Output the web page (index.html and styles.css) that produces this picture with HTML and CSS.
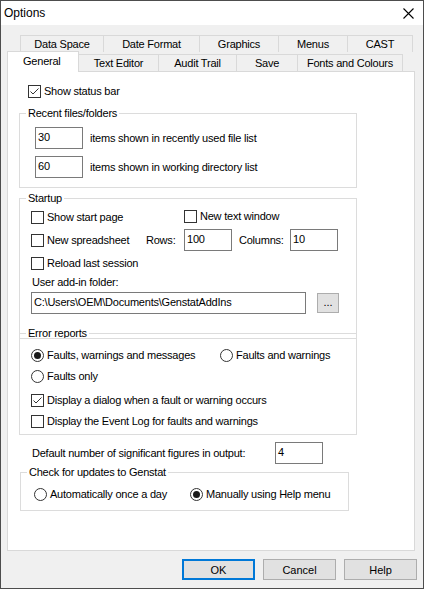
FILE: index.html
```html
<!DOCTYPE html>
<html>
<head>
<meta charset="utf-8">
<link rel="stylesheet" href="styles.css">
</head>
<body>
<div class="window">
  <div class="titlebar">
    <span class="title">Options</span>
    <svg class="close" width="11" height="11" viewBox="0 0 11 11"><path d="M0.5 0.5 L10.5 10.5 M10.5 0.5 L0.5 10.5" stroke="#000" stroke-width="1.1" fill="none"/></svg>
  </div>

  <div class="tabs">
    <div class="tabrow back">
      <div class="tab w-ds">Data Space</div>
      <div class="tab w-df">Date Format</div>
      <div class="tab w-gr">Graphics</div>
      <div class="tab w-me">Menus</div>
      <div class="tab w-ca last">CAST</div>
    </div>
    <div class="tabrow front">
      <div class="tab sel w-ge">General</div>
      <div class="tab w-te">Text Editor</div>
      <div class="tab w-at">Audit Trail</div>
      <div class="tab w-sa">Save</div>
      <div class="tab w-fc">Fonts and Colours</div>
    </div>
  </div>

  <div class="panel">
    <div class="check status"><span class="box checked"><svg width="11" height="11" viewBox="0 0 11 11"><path d="M1.5 5.5 L4 8 L9.5 2.5" stroke="#333" stroke-width="1" fill="none"/></svg></span><span>Show status bar</span></div>

    <div class="group recent">
      <span class="legend">Recent files/folders</span>
      <div class="field-row"><span class="input w48">30</span><span>items shown in recently used file list</span></div>
      <div class="field-row second"><span class="input w48">60</span><span>items shown in working directory list</span></div>
    </div>

    <div class="group startup">
      <span class="legend">Startup</span>
      <div class="row rowa">
        <div class="check c-start"><span class="box"></span><span>Show start page</span></div>
        <div class="check c-text"><span class="box"></span><span>New text window</span></div>
      </div>
      <div class="row rowb">
        <div class="check c-sheet"><span class="box"></span><span>New spreadsheet</span></div>
        <span class="lbl-rows">Rows:</span>
        <span class="input w48">100</span>
        <span class="lbl-cols">Columns:</span>
        <span class="input w48">10</span>
      </div>
      <div class="check rowc"><span class="box"></span><span>Reload last session</span></div>
      <div class="folder-label">User add-in folder:</div>
      <div class="row path-row">
        <span class="input path">C:\Users\OEM\Documents\GenstatAddIns</span>
        <span class="btn small">...</span>
      </div>
    </div>

    <div class="group errors">
      <span class="legend">Error reports</span>
      <div class="row">
        <div class="radio r-fwm"><svg width="13" height="13" viewBox="0 0 13 13"><circle cx="6.5" cy="6.5" r="6" fill="#fff" stroke="#333"/><circle cx="6.5" cy="6.5" r="3.5" fill="#1a1a1a"/></svg><span>Faults, warnings and messages</span></div>
        <div class="radio"><svg width="13" height="13" viewBox="0 0 13 13"><circle cx="6.5" cy="6.5" r="6" fill="#fff" stroke="#333"/></svg><span>Faults and warnings</span></div>
      </div>
      <div class="radio r-only"><svg width="13" height="13" viewBox="0 0 13 13"><circle cx="6.5" cy="6.5" r="6" fill="#fff" stroke="#333"/></svg><span>Faults only</span></div>
      <div class="check c-dialog"><span class="box checked"><svg width="11" height="11" viewBox="0 0 11 11"><path d="M1.5 5.5 L4 8 L9.5 2.5" stroke="#333" stroke-width="1" fill="none"/></svg></span><span>Display a dialog when a fault or warning occurs</span></div>
      <div class="check c-log"><span class="box"></span><span>Display the Event Log for faults and warnings</span></div>
    </div>

    <div class="sigfig">
      <span class="sig-label">Default number of significant figures in output:</span>
      <span class="input w48">4</span>
    </div>

    <div class="group updates">
      <span class="legend">Check for updates to Genstat</span>
      <div class="row">
        <div class="radio r-auto"><svg width="13" height="13" viewBox="0 0 13 13"><circle cx="6.5" cy="6.5" r="6" fill="#fff" stroke="#333"/></svg><span>Automatically once a day</span></div>
        <div class="radio"><svg width="13" height="13" viewBox="0 0 13 13"><circle cx="6.5" cy="6.5" r="6" fill="#fff" stroke="#333"/><circle cx="6.5" cy="6.5" r="3.5" fill="#1a1a1a"/></svg><span>Manually using Help menu</span></div>
      </div>
    </div>
  </div>

  <div class="footer">
    <span class="btn default">OK</span>
    <span class="btn">Cancel</span>
    <span class="btn">Help</span>
  </div>
</div>
</body>
</html>
```

FILE: styles.css
```css
* { box-sizing: border-box; }
html, body { margin: 0; padding: 0; }
body {
  font-family: "Liberation Sans", Arial, sans-serif;
  font-size: 11px;
  letter-spacing: -0.22px;
  color: #000;
  background: #f0f0f0;
}
.window {
  width: 424px;
  height: 589px;
  border: 1px solid #4d4d4d;
  background: #f0f0f0;
  display: flex;
  flex-direction: column;
}
.titlebar {
  height: 24px;
  background: #fff;
  display: flex;
  align-items: center;
  justify-content: space-between;
  padding: 0 9px 0 3px;
}
.title { font-size: 12px; letter-spacing: 0; }
.close { display: block; }

.tabs { margin-top: 10px; }
.tabrow { display: flex; }
.tabrow.back { margin-left: 19px; height: 17px; }
.tabrow.front { margin-left: 6px; height: 19px; align-items: flex-end; }
.tab {
  height: 17px;
  display: flex;
  align-items: center;
  justify-content: center;
  border-color: #d9d9d9;
  border-style: solid;
  border-width: 0;
  background: #f0f0f0;
  line-height: 13px;
}
.back .tab { border-top-width: 1px; border-left-width: 1px; padding-top: 1px; }
.back .tab.last { border-right-width: 1px; }
.front .tab { border-top-width: 1px; border-right-width: 1px; padding-top: 1px; }
.front .tab.sel {
  height: 21px;
  margin-bottom: -1px;
  border-width: 1px 1px 0 1px;
  background: #fff;
  position: relative;
  z-index: 2;
  padding-top: 0;
  padding-bottom: 2px;
  justify-content: flex-start;
  padding-left: 15px;
}
.w-ds { width: 83px; }
.w-df { width: 96px; }
.w-gr { width: 79px; }
.w-me { width: 69px; }
.w-ca { width: 66px; }
.w-ge { width: 72px; }
.w-te { width: 80px; }
.w-at { width: 78px; }
.w-sa { width: 61px; }
.w-fc { width: 105px; }

.panel {
  margin-left: 6px;
  width: 408px;
  height: 480px;
  border: 1px solid #d9d9d9;
  background: #fff;
  display: flex;
  flex-direction: column;
  align-items: flex-start;
}

.check, .radio {
  display: flex;
  align-items: center;
  height: 13px;
  line-height: 13px;
  white-space: nowrap;
}
.box {
  width: 13px;
  height: 13px;
  border: 1px solid #333;
  background: #fff;
  margin-right: 3px;
  flex: none;
  display: flex;
  align-items: center;
  justify-content: center;
}
.box svg { display: block; }
.radio svg { display: block; margin-right: 3px; flex: none; }

.status { margin: 13px 0 0 20px; }

.group {
  position: relative;
  border: 1px solid #dcdcdc;
}
.legend {
  position: absolute;
  top: -8px;
  left: 6px;
  padding: 0 2px;
  line-height: 14px;
  background: #fff;
  white-space: nowrap;
}
.input {
  display: block;
  height: 22px;
  border: 1px solid #7a7a7a;
  background: #fff;
  padding: 1px 0 0 2px;
  line-height: 16px;
  flex: none;
  white-space: nowrap;
  overflow: hidden;
}
.w48 { width: 48px; }
.row { display: flex; align-items: center; }

.recent {
  margin: 15px 0 0 11px;
  width: 338px;
  padding: 13px 0 9px 15px;
}
.field-row { display: flex; align-items: center; gap: 7px; }
.field-row.second { margin-top: 7px; }

.startup {
  margin: 10px 0 0 11px;
  width: 338px;
  padding: 12px 0 24px 11px;
  z-index: 1;
}
.rowa { height: 13px; }
.c-start { width: 153px; }
.c-text { margin-top: -2px; }
.rowb { margin-top: 5px; height: 22px; }
.c-sheet { width: 115px; }
.lbl-rows { width: 38px; }
.lbl-cols { margin-left: 7px; width: 51px; }
.rowc { margin-top: 6px; }
.folder-label { margin-top: 5px; line-height: 14px; height: 14px; padding-left: 1px; }
.path-row { margin-top: 3px; height: 22px; }
.input.path { width: 275px; }
.btn {
  display: flex;
  align-items: center;
  justify-content: center;
  background: #e1e1e1;
  border: 1px solid #adadad;
  letter-spacing: 0;
}
.btn.small { width: 22px; height: 20px; margin-left: 11px; padding-bottom: 2px; }

.errors {
  margin: -6px 0 0 11px;
  width: 338px;
  padding: 15px 0 6px 11px;
}
.r-fwm { width: 189px; }
.r-only { margin-top: 8px; }
.c-dialog { margin-top: 11px; }
.c-log { margin-top: 8px; }

.sigfig {
  margin: 7px 0 0 24px;
  display: flex;
  align-items: center;
}
.sig-label { width: 243px; }

.updates {
  margin: 8px 0 0 12px;
  width: 329px;
  padding: 15px 0 9px 13px;
}
.r-auto { width: 156px; }

.footer {
  margin-top: 8px;
  display: flex;
  justify-content: flex-end;
  gap: 8px;
  padding-right: 6px;
}
.footer .btn { width: 73px; height: 21px; }
.btn.default { border: 2px solid #0078d7; }
```
